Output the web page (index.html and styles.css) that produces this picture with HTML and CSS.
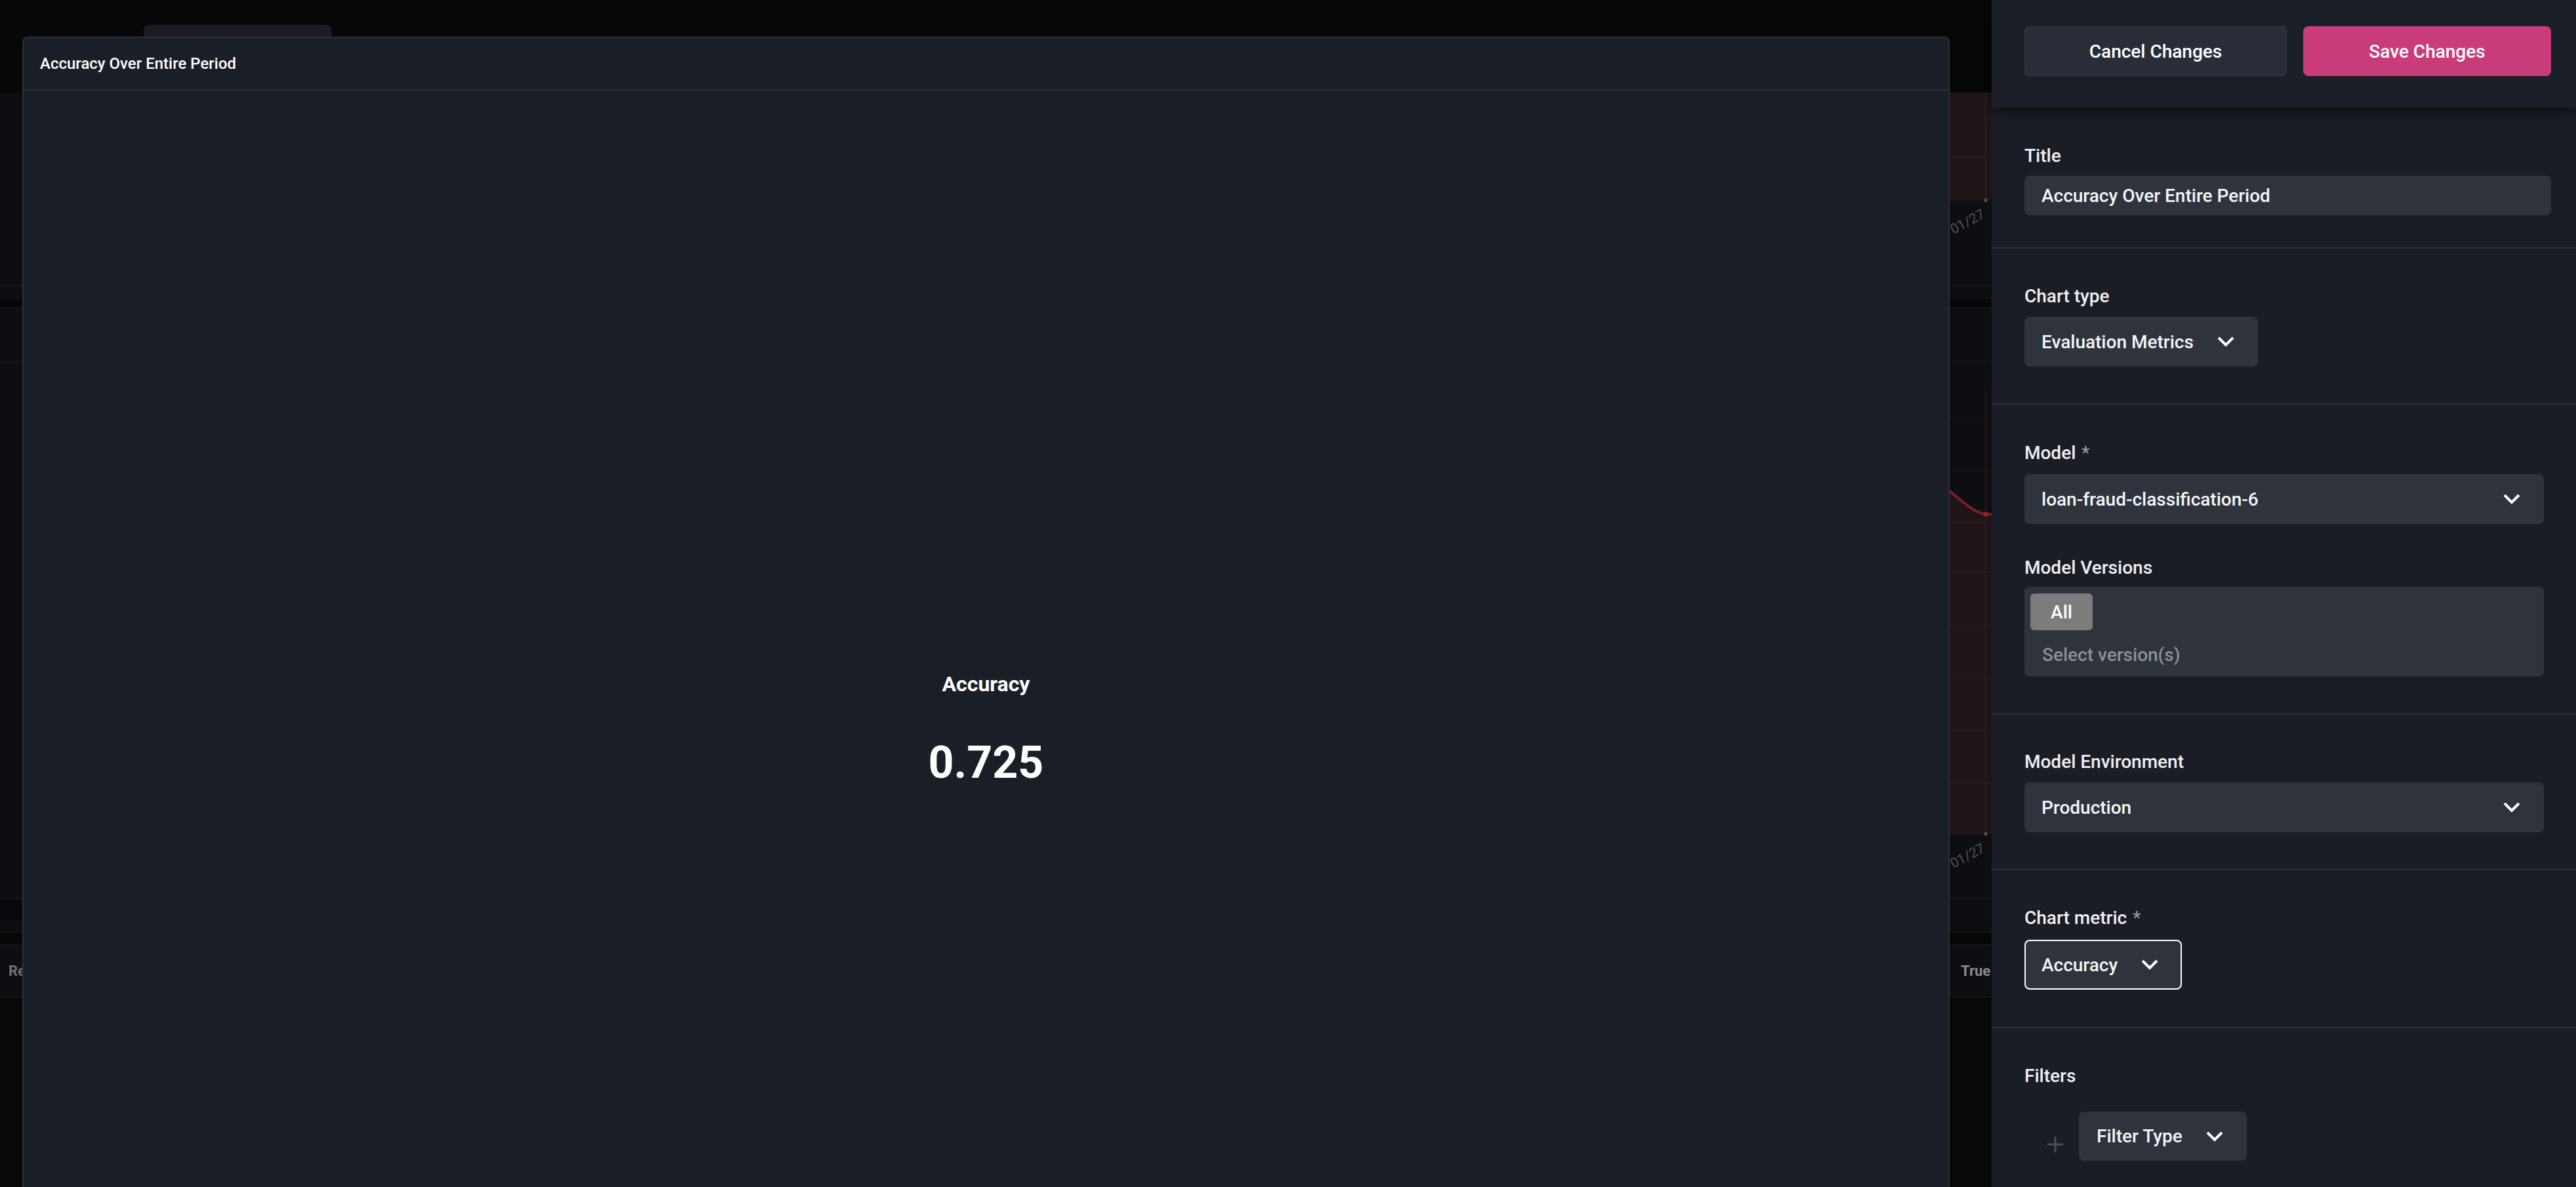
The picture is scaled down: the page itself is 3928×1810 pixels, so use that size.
FILE: index.html
```html
<!DOCTYPE html>
<html lang="en">
<head>
    <meta charset="UTF-8">
    <meta name="viewport" content="width=device-width, initial-scale=1.0">
    <title>Edit Chart</title>
    <link rel="stylesheet" href="styles.css">
</head>
<body>
    <!-- dashboard behind the editor, mostly covered -->
    <div class="dashboard">
        <div class="topbar">
            <div class="topbar-tab"></div>
        </div>

        <div class="dash-row row-a">
            <div class="dash-col"></div>
            <div class="dash-col">
                <svg width="988" height="294" viewBox="0 0 988 294">
                    <rect x="0" y="0" width="988" height="165" fill="#1e1518"/>
                    <line x1="0" y1="98" x2="988" y2="98" stroke="#2b2126" stroke-width="1"/>
                    <line x1="88" y1="0" x2="88" y2="165" stroke="#3a3035" stroke-width="1"/>
                    <rect x="86" y="162" width="4" height="5" fill="#55585e"/>
                    <text x="88" y="190" text-anchor="end" transform="rotate(-28 88 190)" class="tick">01/27</text>
                </svg>
            </div>
        </div>

        <div class="dash-band"></div>

        <div class="dash-row row-b">
            <div class="dash-col col-left">
                <div class="col-head"></div>
                <div class="col-body"></div>
                <div class="col-foot"></div>
            </div>
            <div class="dash-col">
                <svg width="988" height="933" viewBox="0 0 988 933">
                    <path d="M0 255 C40 280 65 312 88 314 L988 314 L988 802 L0 802 Z" fill="#1f1416"/>
                    <g stroke="rgba(255,255,255,0.06)" stroke-width="1">
                        <line x1="0" y1="83" x2="988" y2="83"/>
                        <line x1="0" y1="166" x2="988" y2="166"/>
                        <line x1="0" y1="245" x2="988" y2="245"/>
                        <line x1="0" y1="326" x2="988" y2="326"/>
                        <line x1="0" y1="403" x2="988" y2="403"/>
                        <line x1="0" y1="484" x2="988" y2="484"/>
                        <line x1="0" y1="563" x2="988" y2="563"/>
                        <line x1="0" y1="643" x2="988" y2="643"/>
                        <line x1="0" y1="724" x2="988" y2="724"/>
                    </g>
                    <line x1="88" y1="125" x2="88" y2="802" stroke="#33292e" stroke-width="1"/>
                    <rect x="86" y="799" width="4" height="5" fill="#55585e"/>
                    <path d="M0 255 C40 280 65 312 88 314 L988 314" fill="none" stroke="#7a1f23" stroke-width="4"/>
                    <circle cx="88" cy="314" r="4" fill="#8a2226"/>
                    <text x="88" y="828" text-anchor="end" transform="rotate(-28 88 828)" class="tick">01/27</text>
                    <line x1="0" y1="900" x2="988" y2="900" stroke="#1b1e23" stroke-width="1"/>
                </svg>
            </div>
        </div>

        <div class="dash-band thin"></div>

        <div class="dash-row table-row">
            <div class="cell">Reference</div>
            <div class="cell cell-right">True</div>
        </div>
    </div>

    <!-- chart preview -->
    <div class="chart-modal">
        <div class="chart-modal-header">Accuracy Over Entire Period</div>
        <div class="chart-modal-body">
            <div class="metric-name">Accuracy</div>
            <div class="metric-value">0.725</div>
        </div>
    </div>

    <!-- editor drawer -->
    <aside class="editor">
        <div class="editor-actions">
            <button class="btn btn-cancel" type="button">Cancel Changes</button>
            <button class="btn btn-save" type="button">Save Changes</button>
        </div>

        <div class="editor-section sec-title">
            <label class="field-label">Title</label>
            <div class="text-input">Accuracy Over Entire Period</div>
        </div>

        <div class="editor-section">
            <label class="field-label">Chart type</label>
            <div class="select">
                <span>Evaluation Metrics</span>
                <svg class="chevron" width="26" height="16" viewBox="0 0 26 16"><path d="M2 2l11 11L24 2" fill="none" stroke="#fff" stroke-width="4"/></svg>
            </div>
        </div>

        <div class="editor-section sec-model">
            <label class="field-label">Model <span class="req">*</span></label>
            <div class="select select-wide">
                <span>loan-fraud-classification-6</span>
                <svg class="chevron" width="26" height="16" viewBox="0 0 26 16"><path d="M2 2l11 11L24 2" fill="none" stroke="#fff" stroke-width="4"/></svg>
            </div>

            <label class="field-label label-spaced">Model Versions</label>
            <div class="versions">
                <div class="chip">All</div>
                <div class="placeholder">Select version(s)</div>
            </div>
        </div>

        <div class="editor-section sec-env">
            <label class="field-label">Model Environment</label>
            <div class="select select-wide">
                <span>Production</span>
                <svg class="chevron" width="26" height="16" viewBox="0 0 26 16"><path d="M2 2l11 11L24 2" fill="none" stroke="#fff" stroke-width="4"/></svg>
            </div>
        </div>

        <div class="editor-section sec-metric">
            <label class="field-label">Chart metric <span class="req">*</span></label>
            <div class="select select-active">
                <span>Accuracy</span>
                <svg class="chevron" width="26" height="16" viewBox="0 0 26 16"><path d="M2 2l11 11L24 2" fill="none" stroke="#fff" stroke-width="4"/></svg>
            </div>
        </div>

        <div class="editor-section sec-last">
            <label class="field-label">Filters</label>
            <div class="filter-row">
                <svg class="plus" width="26" height="26" viewBox="0 0 26 26"><path d="M13 1v24M1 13h24" fill="none" stroke="#4b4e54" stroke-width="3"/></svg>
                <div class="select select-filter">
                    <span>Filter Type</span>
                    <svg class="chevron" width="26" height="16" viewBox="0 0 26 16"><path d="M2 2l11 11L24 2" fill="none" stroke="#fff" stroke-width="4"/></svg>
                </div>
            </div>
        </div>
    </aside>
</body>
</html>
```

FILE: styles.css
```css
* {
    box-sizing: border-box;
}

html, body {
    margin: 0;
}

body {
    position: relative;
    width: 3928px;
    height: 1810px;
    overflow: hidden;
    background: #07080a;
    font-family: Roboto, "Liberation Sans", sans-serif;
    color: #f1f3f5;
}

/* background dashboard */
.dashboard {
    width: 3928px;
}

.topbar {
    height: 141px;
    padding: 38px 0 0 219px;
    background: #060709;
}

.topbar-tab {
    width: 287px;
    height: 103px;
    background: #1a1c21;
    border-radius: 8px 8px 0 0;
}

.dash-row {
    display: grid;
    grid-template-columns: 2940px 988px;
    background: #0c0e11;
}

.dash-col svg {
    display: block;
}

.row-a {
    height: 294px;
}

.row-b {
    height: 933px;
}

.col-left {
    display: flex;
    flex-direction: column;
}

.col-head {
    height: 83px;
    border-bottom: 1px solid #1b1e23;
}

.col-body {
    flex: 1;
}

.col-foot {
    height: 33px;
    border-top: 1px solid #1b1e23;
    background: #08090c;
}

.dash-band {
    height: 35px;
    border-top: 1px solid #1b1e23;
    border-bottom: 1px solid #1b1e23;
    background: linear-gradient(#0b0d10 0, #0b0d10 18px, #1b1e23 18px, #1b1e23 19px, #060709 19px);
}

.dash-band.thin {
    height: 38px;
    border-top: none;
}

.table-row {
    height: 80px;
    align-items: center;
    border-bottom: 1px solid #1b1e23;
    font-size: 22px;
    font-weight: 700;
    color: #707378;
}

.cell {
    padding-left: 13px;
}

.cell-right {
    padding-left: 50px;
    color: #8a8d92;
}

.tick {
    font-family: Roboto, "Liberation Sans", sans-serif;
    font-size: 21px;
    fill: #4f5258;
}

/* chart preview */
.chart-modal {
    position: absolute;
    left: 34px;
    top: 56px;
    width: 2939px;
    height: 1800px;
    background: #1a1e26;
    border: 2px solid #2b3038;
    border-radius: 8px;
}

.chart-modal-header {
    height: 80px;
    padding-left: 25px;
    display: flex;
    align-items: center;
    border-bottom: 2px solid #2b3038;
    font-size: 24px;
    font-weight: 500;
    color: #fff;
}

.chart-modal-body {
    padding-top: 887px;
    text-align: center;
    color: #fff;
}

.metric-name {
    font-size: 32px;
    font-weight: 700;
    line-height: 36px;
}

.metric-value {
    margin-top: 62px;
    font-size: 68px;
    font-weight: 700;
    line-height: 80px;
}

/* editor drawer */
.editor {
    position: absolute;
    top: 0;
    right: 0;
    width: 891px;
    height: 1810px;
    background: #1a1d25;
}

.editor-actions {
    position: relative;
    z-index: 1;
    height: 164px;
    padding: 40px 38px 0 50px;
    display: flex;
    gap: 25px;
    background: #1b1f28;
    box-shadow: 0 8px 18px rgba(0, 0, 0, 0.45);
}

.btn {
    height: 76px;
    border-radius: 8px;
    font-family: inherit;
    font-size: 28px;
    font-weight: 500;
    color: #fff;
    cursor: pointer;
}

.btn-cancel {
    width: 400px;
    background: #282d37;
    border: 2px solid #2f353f;
}

.btn-save {
    width: 378px;
    background: #c93c79;
    border: none;
}

.editor-section {
    padding: 51px 38px 56px 50px;
    border-bottom: 2px solid #2a2e36;
}

.sec-title {
    padding-top: 52px;
    padding-bottom: 49px;
}

.sec-model {
    padding-top: 52px;
    padding-bottom: 57px;
}

.sec-model .select {
    margin-top: 13px;
}

.sec-env {
    padding-top: 50px;
}

.sec-metric {
    padding-bottom: 57px;
}

.sec-metric .select {
    margin-top: 14px;
}

.sec-last {
    border-bottom: none;
}

.field-label {
    display: block;
    padding-top: 3px;
    font-size: 28px;
    font-weight: 500;
    line-height: 38px;
    color: #eef0f3;
}

.label-spaced {
    margin-top: 45px;
}

.req {
    margin-left: 2px;
    font-weight: 400;
    color: #9ba1a9;
}

.text-input {
    margin-top: 11px;
    height: 60px;
    padding: 0 26px;
    display: flex;
    align-items: center;
    background: #2e333c;
    border-radius: 8px;
    font-size: 28px;
    font-weight: 500;
    color: #f4f5f7;
}

.select {
    margin-top: 12px;
    height: 76px;
    padding: 0 36px 0 26px;
    display: inline-flex;
    align-items: center;
    gap: 36px;
    background: #2e333c;
    border-radius: 8px;
    font-size: 28px;
    font-weight: 500;
    color: #f4f5f7;
}

.select-wide {
    display: flex;
    justify-content: space-between;
    margin-right: 11px;
}

.select-active {
    padding: 0 34px 0 24px;
    border: 2px solid #fff;
}

.select-filter {
    margin-top: 0;
    height: 75px;
    padding-left: 27px;
}

.chevron {
    flex-shrink: 0;
}

.versions {
    margin-top: 10px;
    margin-right: 11px;
    height: 136px;
    padding: 10px 9px;
    background: #2e333c;
    border-radius: 8px;
}

.chip {
    width: 95px;
    height: 56px;
    display: flex;
    align-items: center;
    justify-content: center;
    background: #7c7c7c;
    border-radius: 6px;
    font-size: 28px;
    font-weight: 500;
    color: #fff;
}

.placeholder {
    margin-top: 18px;
    padding-left: 18px;
    font-size: 28px;
    font-weight: 500;
    line-height: 40px;
    color: #8b9097;
}

.filter-row {
    margin-top: 35px;
    padding-left: 34px;
    display: flex;
    align-items: center;
    gap: 23px;
}

.plus {
    margin-top: 25px;
}
```
